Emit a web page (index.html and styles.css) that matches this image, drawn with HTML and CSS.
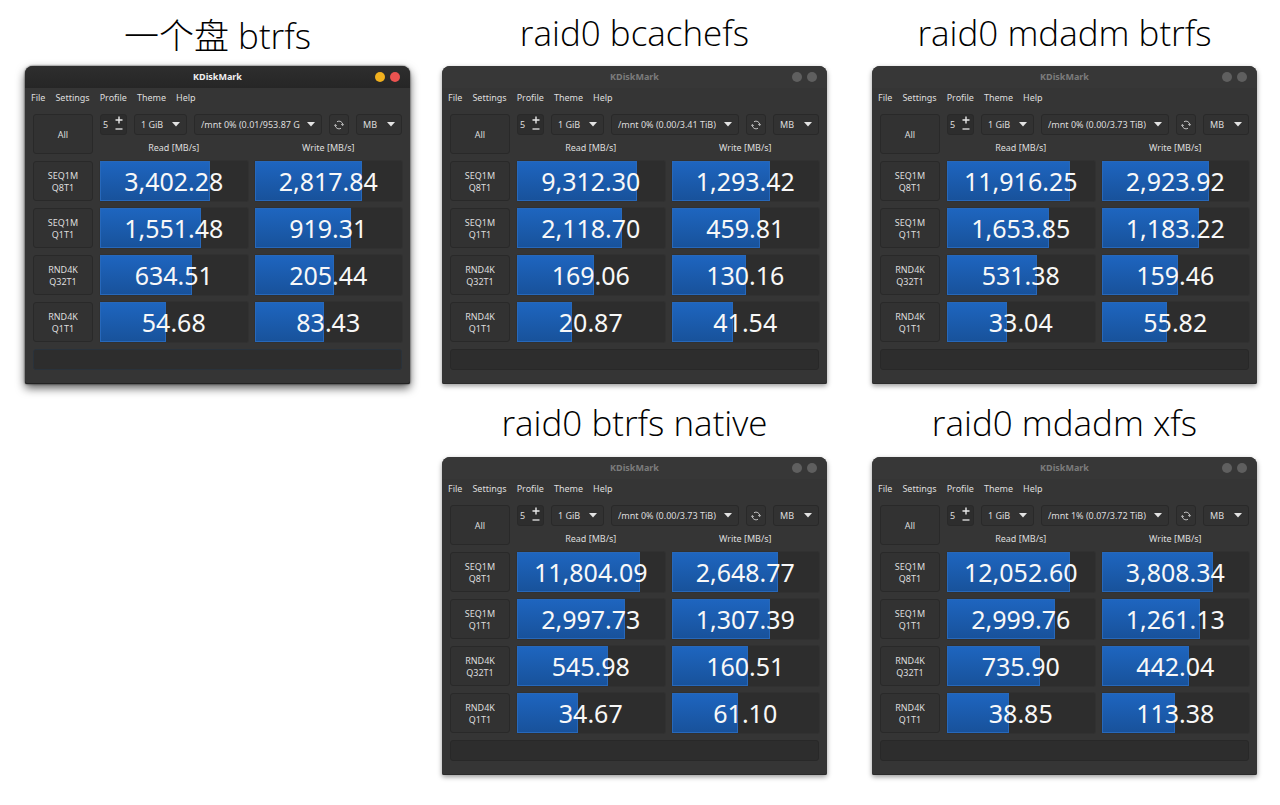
FILE: index.html
```
<!DOCTYPE html>
<html lang="zh-CN">
<head>
<meta charset="utf-8">
<meta name="viewport" content="width=device-width, initial-scale=1">
<title>KDiskMark</title>
<link rel="stylesheet" href="styles.css">
</head>
<body>
<main class="board" id="board"></main>
<script src="app.js"></script>
</body>
</html>
```

FILE: styles.css
```
* {
  box-sizing: border-box;
}

body {
  margin: 0;
  background: #fff;
  color: #dedede;
  font-family: "Noto Sans", "Noto Sans CJK SC", sans-serif;
  font-size: 9px;
}

button,
input,
select {
  margin: 0;
  padding: 0;
  color: inherit;
  font: inherit;
}

.board {
  display: grid;
  grid-template-columns: 385fr 32fr 385fr 45fr 385fr;
  padding: 0 23px 31px 25px;
}

.result {
  margin: 0;
}

.single { grid-area: 1 / 1; }
.bcachefs { grid-area: 1 / 3; }
.mdadm-btrfs { grid-area: 1 / 5; }
.native { grid-area: 2 / 3; }
.mdadm-xfs { grid-area: 2 / 5; }

.caption {
  display: flex;
  align-items: center;
  justify-content: center;
  height: 66px;
  color: #000;
  font-family: "Open Sans", "Noto Sans CJK SC", sans-serif;
  font-size: 35px;
  font-weight: 300;
  line-height: 40px;
  white-space: nowrap;
}

.single .caption {
  padding-top: 6px;
}

.native .caption,
.mdadm-xfs .caption {
  height: 73px;
  padding-top: 4px;
}

.window {
  border-radius: 8px 8px 2px 2px;
  background: #353535;
  box-shadow: 0 2px 5px rgba(0, 0, 0, 0.4), inset 0 -1px #2b2b2b;
}

.single .window {
  box-shadow: 0 4px 10px rgba(0, 0, 0, 0.65), 0 0 2px #222, inset 0 -1px #222;
}

.titlebar {
  display: grid;
  grid-template-columns: 1fr auto 1fr;
  align-items: center;
  height: 22px;
  padding: 0 10px;
  border-radius: 8px 8px 0 0;
  background: #373737;
  color: #7c7c7c;
}

.single .titlebar {
  background: linear-gradient(#2e2e2e, #262626);
  color: #f0f0f0;
}

.title {
  grid-column: 2;
  margin: 0;
  font-size: 9px;
  font-weight: 700;
  line-height: 12px;
}

.lights {
  display: flex;
  justify-content: flex-end;
  gap: 5px;
}

.light {
  width: 10px;
  height: 10px;
  border: 0;
  border-radius: 50%;
  background: #5f5f5f;
}

.single .minimize { background: #f0b01e; }
.single .close { background: #ec5350; }

.menu {
  display: flex;
  align-items: center;
  gap: 10px;
  height: 20px;
  padding: 0 6px;
}

.menu button {
  border: 0;
  background: none;
  line-height: 12px;
}

.panel {
  display: grid;
  grid-template-columns: 60px 1fr 1fr;
  gap: 7px;
  padding: 6px 8px 14px;
}

.run {
  height: 40px;
  padding-top: 1px;
  border: 1px solid #292929;
  border-radius: 3px;
  background: #323232;
  line-height: 12px;
}

.head {
  grid-column: 2 / 4;
}

.tools {
  display: grid;
  grid-template-columns: 27px 53px 1fr 20px 46px;
  gap: 7px;
}

.spin,
.combo,
.refresh {
  height: 21px;
  border: 1px solid #292929;
  border-radius: 3px;
  background: #323232;
}

.spin {
  display: grid;
  grid-template-columns: 1fr 14px;
  background: #2d2d2d;
}

.spin input {
  width: 100%;
  min-width: 0;
  padding-left: 2px;
  border: 0;
  background: none;
}

.steps {
  display: grid;
}

.steps button {
  display: grid;
  place-items: center;
  border: 0;
  background: none;
}

.combo {
  display: grid;
  align-items: center;
}

.combo select,
.combo svg {
  grid-area: 1 / 1;
}

.combo select {
  width: 100%;
  min-width: 0;
  height: 19px;
  padding: 0 20px 0 6px;
  border: 0;
  appearance: none;
  background: none;
}

.combo svg {
  justify-self: end;
  margin-right: 6px;
  pointer-events: none;
}

.refresh {
  display: grid;
  place-items: center;
}

.labels {
  display: grid;
  grid-template-columns: 1fr 1fr;
  gap: 7px;
  padding-top: 6px;
  line-height: 13px;
  text-align: center;
}

.bar {
  display: grid;
  height: 40px;
  border-radius: 2px;
  background: #2d2d2d;
  box-shadow: 0 0 0 1px #313131;
}

.fill,
.value {
  grid-area: 1 / 1;
}

.fill {
  border: 1px solid #2768ba;
  background: linear-gradient(#1e65bf, #18529b);
}

.value {
  place-self: center;
  color: #f8f8f8;
  font-size: 25px;
  line-height: 40px;
}

.status {
  grid-column: 1 / 4;
  width: 100%;
  height: 21px;
  border: 1px solid #282828;
  border-radius: 3px;
  background: #2d2d2d;
}

.single .status {
  border-color: #29323b;
}
```

FILE: app.js
```
const tests = [["SEQ1M", "Q8T1"], ["SEQ1M", "Q1T1"], ["RND4K", "Q32T1"], ["RND4K", "Q1T1"]];
const BAR = 147.5;

// Each row holds: read value, read bar length, write value, write bar length.
const results = [
  { id: "single", name: "一个盘 btrfs", disk: "/mnt 0% (0.01/953.87 G",
    rows: [["3,402.28", 110, "2,817.84", 108], ["1,551.48", 101, "919.31", 96], ["634.51", 92, "205.44", 80], ["54.68", 66, "83.43", 69]] },
  { id: "bcachefs", name: "raid0 bcachefs", disk: "/mnt 0% (0.00/3.41 TiB)",
    rows: [["9,312.30", 120, "1,293.42", 99], ["2,118.70", 105, "459.81", 89], ["169.06", 77, "130.16", 74], ["20.87", 55, "41.54", 62]] },
  { id: "mdadm-btrfs", name: "raid0 mdadm btrfs", disk: "/mnt 0% (0.00/3.73 TiB)",
    rows: [["11,916.25", 123, "2,923.92", 108], ["1,653.85", 102, "1,183.22", 98], ["531.38", 90, "159.46", 77], ["33.04", 60, "55.82", 65]] },
  { id: "native", name: "raid0 btrfs native", disk: "/mnt 0% (0.00/3.73 TiB)",
    rows: [["11,804.09", 123, "2,648.77", 107], ["2,997.73", 108, "1,307.39", 99], ["545.98", 91, "160.51", 77], ["34.67", 61, "61.10", 67]] },
  { id: "mdadm-xfs", name: "raid0 mdadm xfs", disk: "/mnt 1% (0.07/3.72 TiB)",
    rows: [["12,052.60", 123, "3,808.34", 111], ["2,999.76", 108, "1,261.13", 99], ["735.90", 93, "442.04", 87], ["38.85", 62, "113.38", 73]] }
];

const combo = (label, text) => `
  <div class="combo">
    <select aria-label="${label}"><option>${text}</option></select>
    <svg width="8" height="5" viewBox="0 0 8 5" aria-hidden="true"><path d="M0 0h8L4 4.6z" fill="#e4e4e4"/></svg>
  </div>`;

const bar = (value, length) => `
  <div class="bar"><div class="fill" style="width:${(length / BAR * 100).toFixed(1)}%"></div><span class="value">${value}</span></div>`;

const card = r => `
<figure class="result ${r.id}">
  <figcaption class="caption">${r.name}</figcaption>
  <section class="window">
    <header class="titlebar">
      <h2 class="title">KDiskMark</h2>
      <div class="lights">
        <button class="light minimize" aria-label="Minimize"></button>
        <button class="light close" aria-label="Close"></button>
      </div>
    </header>
    <nav class="menu">${["File", "Settings", "Profile", "Theme", "Help"].map(m => `<button>${m}</button>`).join("")}</nav>
    <div class="panel">
      <button class="run">All</button>
      <div class="head">
        <div class="tools">
          <div class="spin">
            <input type="text" inputmode="numeric" value="5" aria-label="Loops">
            <div class="steps">
              <button aria-label="More"><svg width="8" height="8" viewBox="0 0 8 8"><path d="M4 .5v7M.5 4h7" stroke="#e8e8e8" stroke-width="1.4"/></svg></button>
              <button aria-label="Fewer"><svg width="8" height="8" viewBox="0 0 8 8"><path d="M.5 4h7" stroke="#e8e8e8" stroke-width="1.3"/></svg></button>
            </div>
          </div>
          ${combo("Size", "1 GiB")}
          ${combo("Disk", r.disk)}
          <button class="refresh" aria-label="Refresh"><svg width="10" height="10" viewBox="0 0 10 10" fill="none" stroke="#d0d0d0" stroke-width=".9"><path d="M3 1.7A3.8 3.8 0 0 1 8.8 5M7 8.3A3.8 3.8 0 0 1 1.2 5"/><path d="M7.2 4.3l1.6 1.2L10 4.2M0 5.8l1.2-1.3 1.6 1.2"/></svg></button>
          ${combo("Unit", "MB")}
        </div>
        <div class="labels"><span>Read [MB/s]</span><span>Write [MB/s]</span></div>
      </div>
      ${r.rows.map((v, i) => `<button class="run">${tests[i].join("<br>")}</button>${bar(v[0], v[1])}${bar(v[2], v[3])}`).join("")}
      <input class="status" type="text" aria-label="Status" readonly>
    </div>
  </section>
</figure>`;

document.getElementById("board").innerHTML = results.map(card).join("");
```
